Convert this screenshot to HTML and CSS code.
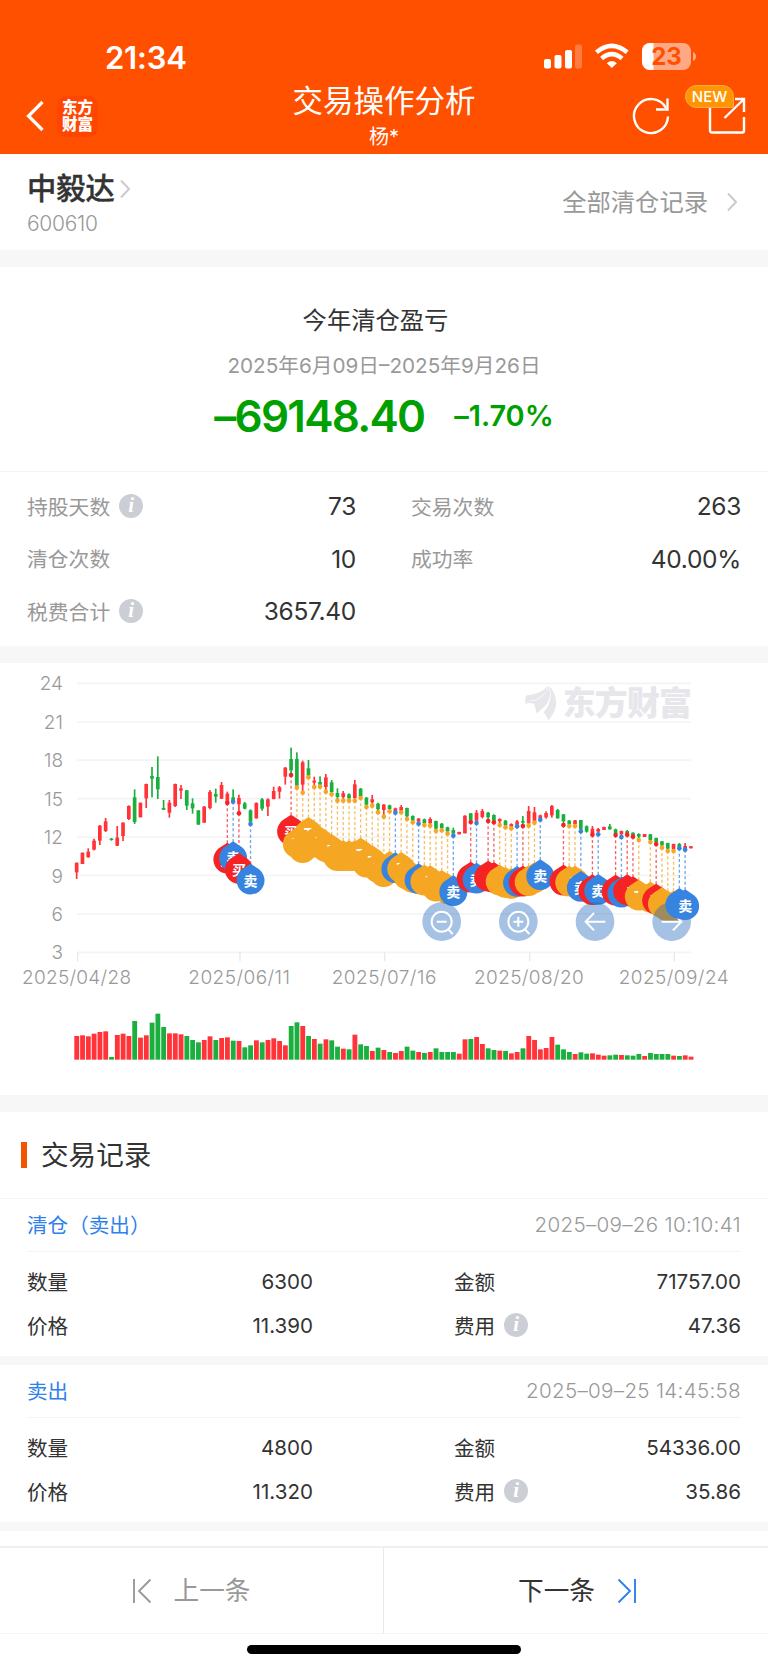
FILE: index.html
```html
<!DOCTYPE html>
<html lang="zh-CN">
<head>
    <meta charset="UTF-8">
    <meta name="viewport" content="width=device-width, initial-scale=1.0">
    <title>交易操作分析</title>
    <link rel="stylesheet" href="styles.css">
</head>
<body>
    <header class="header">
        <div class="status">
            <span class="time">21:34</span>
            <svg class="status-icons" width="154" height="28" viewBox="0 0 154 28">
                <g fill="#fff">
                    <rect x="0" y="16" width="7" height="9.500" rx="2"/>
                    <rect x="10.500" y="12" width="7" height="13.500" rx="2"/>
                    <rect x="21" y="7" width="7" height="18.500" rx="2"/>
                    <rect x="31" y="1.500" width="7" height="24" rx="2" opacity=".25"/>
                    <path d="M67.800 25 L62.800 20.200 Q67.800 16 72.800 20.200 Z"/>
                </g>
                <g fill="none" stroke="#fff" stroke-width="4.600">
                    <path d="M52.400 9.300 Q67.800 -3.500 83.200 9.300"/>
                    <path d="M57.600 15.500 Q67.800 6.700 78 15.500"/>
                </g>
                <rect x="98" y="0" width="49" height="27" rx="8" fill="#ffa883"/>
                <path d="M109.500 0H106a8 8 0 0 0-8 8v11a8 8 0 0 0 8 8h3.500Z" fill="#fff"/>
                <path d="M149 9q3 1.500 3 4.500t-3 4.500Z" fill="#ffa883"/>
                <text class="battery-text" x="122.500" y="21.700" text-anchor="middle">23</text>
            </svg>
        </div>
        <div class="nav">
            <div class="nav-left">
                <svg width="18" height="32" viewBox="0 0 18 32" fill="none" stroke="#fff" stroke-width="3.200"><path d="M16.500 2 L2.500 16 L16.500 30"/></svg>
                <div class="logo">东方<br>财富</div>
            </div>
            <div class="nav-title">
                <h1>交易操作分析</h1>
                <p>杨*</p>
            </div>
            <div class="nav-right">
                <svg width="38" height="38" viewBox="0 0 38 38" fill="none" stroke="#fff" stroke-width="2.400"><path d="M36 19.500 A17 17 0 1 1 34 11"/><path d="M35.500 1.500 V12.500 H24"/></svg>
                <div class="share">
                    <svg width="38" height="38" viewBox="0 0 38 38" fill="none" stroke="#fff" stroke-width="2.400"><path d="M36 20 V33.500 Q36 35.500 34 35.500 H4 Q2 35.500 2 33.500 V5"/><path d="M27 2 H36 V15 M36 2 L16.500 21"/></svg>
                    <span class="badge">NEW</span>
                </div>
            </div>
        </div>
    </header>

    <!-- Stock -->
    <section class="stock">
        <div>
            <h2>中毅达<svg width="10" height="20" viewBox="0 0 10 20" fill="none" stroke="#ccc" stroke-width="2"><path d="M1 1.500 L9 10 L1 18.500"/></svg></h2>
            <p>600610</p>
        </div>
        <div class="all-records"><span>全部清仓记录</span><svg width="10" height="20" viewBox="0 0 10 20" fill="none" stroke="#ccc" stroke-width="2"><path d="M1 1.500 L9 10 L1 18.500"/></svg></div>
    </section>

    <!-- Profit and loss -->
    <section class="profit">
        <h3>今年清仓盈亏</h3>
        <p class="period">2025年6月09日–2025年9月26日</p>
        <div class="amount"><span class="total">–69148.40</span><span class="rate">–1.70%</span></div>
    </section>
    <section class="stats">
        <div><span>持股天数<i class="info">i</i></span><b>73</b></div>
        <div><span>交易次数</span><b>263</b></div>
        <div><span>清仓次数</span><b>10</b></div>
        <div><span>成功率</span><b>40.00%</b></div>
        <div><span>税费合计<i class="info">i</i></span><b>3657.40</b></div>
    </section>

    <!-- K line chart, drawn at 3x -->
    <section class="chart">
        <svg id="chart" width="768" height="432" viewBox="0 9 2304 1296">
            <g id="grid"></g>
            <g fill="#e6e6eb">
                <g transform="translate(1500 0)">
                    <path d="M77 132 C74 120 76 108 82 105 C105 103 130 96 143 78 C140 100 118 117 96 121 C86 123 80 126 77 132Z"/>
                    <path d="M77 132 C78 122 88 124 100 122 C122 118 140 102 144 78 C143 106 127 126 101 131 C90 128 82 128 77 132Z"/>
                    <path d="M101 131 C127 126 143 106 144 78 C152 92 152 115 140 132 C130 145 115 155 109 161 C108 150 106 140 101 131Z"/>
                    <path d="M148 78 C165 95 170 120 168 135 C165 155 155 170 145 181 C140 170 135 162 131 157 C150 135 157 110 148 78Z"/>
                </g>
                <text class="watermark" x="1688" y="166" textLength="388">东方财富</text>
            </g>
            <g id="candles"></g>
            <g id="pins"></g>
            <g id="buttons">
                <g fill="rgba(30,100,187,.4)">
                    <circle cx="1325" cy="785" r="58"/>
                    <circle cx="1555" cy="785" r="58"/>
                    <circle cx="1785" cy="785" r="58"/>
                    <circle cx="2015" cy="785" r="58"/>
                </g>
                <g fill="none" stroke="#fff" stroke-width="6">
                    <circle cx="1325" cy="785" r="30"/>
                    <path d="M1310 785 h30 M1345 808 L1358 822"/>
                    <circle cx="1555" cy="785" r="30"/>
                    <path d="M1540 785 h30 M1555 770 v30 M1575 808 L1588 822"/>
                    <path d="M1816 785 H1757 M1782 759 L1757 785 L1782 811"/>
                    <path d="M1985 785 H2044 M2019 759 L2044 785 L2019 811"/>
                </g>
            </g>
            <g id="last-pins"></g>
        </svg>
    </section>

    <!-- Trade records -->
    <section class="records">
        <h2 class="records-title">交易记录</h2>
        <div class="record">
            <div class="record-head"><span>清仓（卖出）</span><time>2025–09–26 10:10:41</time></div>
            <div class="record-body">
                <div><span>数量</span><b>6300</b></div>
                <div><span>金额</span><b>71757.00</b></div>
                <div><span>价格</span><b>11.390</b></div>
                <div><span>费用<i class="info">i</i></span><b>47.36</b></div>
            </div>
        </div>
        <div class="record">
            <div class="record-head"><span>卖出</span><time>2025–09–25 14:45:58</time></div>
            <div class="record-body">
                <div><span>数量</span><b>4800</b></div>
                <div><span>金额</span><b>54336.00</b></div>
                <div><span>价格</span><b>11.320</b></div>
                <div><span>费用<i class="info">i</i></span><b>35.86</b></div>
            </div>
        </div>
    </section>

    <footer class="pager">
        <div class="prev">
            <svg width="20" height="26" viewBox="0 0 20 26" fill="none" stroke="#999" stroke-width="1.900"><path d="M2 1 V25 M18.500 1.500 L7 13 L18.500 24.500"/></svg>
            <span>上一条</span>
        </div>
        <div class="next">
            <span>下一条</span>
            <svg width="20" height="26" viewBox="0 0 20 26" fill="none" stroke="#2f80ed" stroke-width="1.900"><path d="M18 1 V25 M1.500 1.500 L13 13 L1.500 24.500"/></svg>
        </div>
    </footer>
    <div class="home-bar"></div>

    <script src="chart.js"></script>
</body>
</html>
```
FILE: styles.css
```css
* {
    box-sizing: border-box;
}
body {
    margin: 0;
    height: 1669px;
    background: #fff;
    color: #333;
    font-family: Inter, "Noto Sans CJK SC", sans-serif;
    display: flex;
    flex-direction: column;
    overflow: hidden;
}
h1, h2, h3, p {
    margin: 0;
    font-weight: 400;
}
b {
    font-weight: 400;
}
svg {
    display: block;
    flex: none;
}
.header {
    height: 154px;
    background: #ff5000;
    color: #fff;
    padding-top: 36px;
}
.status {
    height: 42px;
    padding: 0 70px 0 105px;
    display: flex;
    justify-content: space-between;
    align-items: center;
}
.time {
    font-size: 31px;
    font-weight: 600;
    letter-spacing: -0.2px;
}
.battery-text {
    font-size: 24px;
    font-weight: 700;
    fill: #ff5000;
}
.nav {
    height: 76px;
    padding: 0 22px 0 26px;
    display: flex;
    justify-content: space-between;
}
.nav-left, .nav-right {
    width: 210px;
    height: 76px;
    display: flex;
    align-items: center;
}
.nav-left {
    gap: 13px;
}
.logo {
    width: 41px;
    height: 41px;
    border-radius: 9px;
    background: #ff4600;
    font-size: 15.5px;
    font-weight: 900;
    line-height: 17px;
    text-align: center;
    padding-top: 3px;
}
.nav-title {
    padding-right: 4px;
    text-align: center;
}
.nav-title h1 {
    font-size: 30.5px;
    line-height: 45px;
}
.nav-title p {
    font-size: 20px;
    line-height: 28px;
}
.nav-right {
    justify-content: flex-end;
    gap: 38px;
}
.share {
    position: relative;
}
.badge {
    position: absolute;
    left: -23px;
    top: -12px;
    width: 49px;
    height: 23px;
    border: 1px solid #ffab4a;
    border-radius: 12px 12px 2px 12px;
    background: #ff9500;
    font-size: 15px;
    font-weight: 500;
    line-height: 21px;
    text-align: center;
}
.stock {
    height: 113px;
    padding: 14px 31px 0 27px;
    border-bottom: 17px solid #f7f7f7;
    display: flex;
    justify-content: space-between;
}
.stock h2 {
    display: flex;
    align-items: center;
    gap: 5px;
    font-size: 29.3px;
    font-weight: 500;
    line-height: 42px;
    -webkit-text-stroke: 0.4px #333;
}
.stock p {
    font-size: 21px;
    font-weight: 300;
    letter-spacing: -0.3px;
    line-height: 28px;
    color: #999;
}
.all-records {
    height: 68px;
    display: flex;
    align-items: center;
    gap: 19px;
    font-size: 24.3px;
    color: #999;
}
.all-records span {
    padding-bottom: 3px;
}
.profit {
    height: 205px;
    padding-top: 33px;
    border-bottom: 1px solid #f3f3f3;
    text-align: center;
}
.profit h3 {
    padding-right: 17px;
    font-size: 24.3px;
    line-height: 40px;
}
.period {
    margin-top: 11px;
    font-size: 20.7px;
    line-height: 30px;
    color: #999;
}
.amount {
    display: flex;
    justify-content: center;
    align-items: center;
    gap: 30px;
    margin-top: 10px;
    line-height: 50px;
    color: #00a000;
}
.total {
    font-size: 44px;
    font-weight: 600;
    letter-spacing: -1.75px;
}
.rate {
    font-size: 29px;
    font-weight: 600;
    letter-spacing: -0.1px;
}
.stats {
    height: 191px;
    padding: 8px 27px 0;
    border-bottom: 17px solid #f7f7f7;
    display: grid;
    grid-template-columns: 329px 330px;
    grid-auto-rows: 52.5px;
    column-gap: 55px;
}
.stats div, .record-body div {
    display: flex;
    justify-content: space-between;
    align-items: center;
}
.stats span {
    display: flex;
    align-items: center;
    padding-bottom: 1px;
    font-size: 20.8px;
    color: #999;
}
.stats b {
    font-size: 24.5px;
    letter-spacing: -0.3px;
}
.info {
    width: 24px;
    height: 24px;
    margin-left: 9px;
    border-radius: 50%;
    background: #cbced4;
    color: #fff;
    font-family: "Liberation Serif", serif;
    font-size: 21px;
    font-weight: 700;
    font-style: italic;
    line-height: 23px;
    text-align: center;
}
.chart {
    height: 449px;
    border-bottom: 17px solid #f7f7f7;
}
.axis {
    font-size: 57px;
    font-weight: 300;
    fill: #999;
}
.watermark {
    font-size: 99px;
    font-weight: 900;
}
.pin-text {
    font-size: 42px;
    font-weight: 700;
    fill: #fff;
    text-anchor: middle;
}
.records {
    flex: 1;
}
.records-title {
    height: 87px;
    padding-left: 21px;
    padding-bottom: 1px;
    border-bottom: 1px solid #f3f3f3;
    display: flex;
    align-items: center;
    gap: 14px;
    font-size: 27.6px;
    line-height: 40px;
}
.records-title::before {
    content: "";
    width: 6px;
    height: 26px;
    background: #f25500;
}
.record {
    height: 166px;
    padding: 0 27px;
    border-bottom: 9px solid #f7f7f7;
    font-size: 20.6px;
}
.record-head {
    height: 53px;
    border-bottom: 1px solid #f3f3f3;
    display: flex;
    justify-content: space-between;
    align-items: center;
    color: #2f80ed;
}
.record-head span {
    padding-bottom: 2px;
}
.record-head time {
    padding-bottom: 1px;
    font-weight: 300;
    letter-spacing: 0.3px;
    color: #999;
}
.record-body {
    padding-top: 8px;
    display: grid;
    grid-template-columns: 286px 287px;
    grid-auto-rows: 43.5px;
    column-gap: 141px;
}
.record-body span {
    display: flex;
    align-items: center;
    padding-bottom: 1px;
}
.pager {
    height: 88px;
    border-top: 2px solid #f0f0f0;
    border-bottom: 1px solid #f3f3f3;
    display: flex;
    font-size: 25.7px;
}
.pager div {
    width: 50%;
    display: flex;
    justify-content: center;
    align-items: center;
    gap: 21px;
}
.pager span {
    padding-bottom: 4px;
}
.prev {
    color: #999;
    border-right: 1px solid #e8e8e8;
}
.pager .next {
    gap: 22px;
    padding-left: 3px;
}
.home-bar {
    width: 274px;
    height: 9px;
    margin: 11px auto 15px;
    border-radius: 5px;
    background: #000;
}
```
FILE: chart.js
```js
// high, low, body top, body bottom, volume, up (1) / down (0)
const candles = [
    [608,657,608,637,71,1],[578,612,578,612,73,1],[565,593,575,592,70,1],[536,571,542,569,78,1],
    [495,555,497,542,83,1],[474,516,484,513,85,1],[534,542,536,540,8,0],[498,558,533,557,74,1],
    [487,543,488,528,78,1],[436,480,438,477,71,1],[388,492,412,486,116,0],[428,472,428,472,66,1],
    [371,444,372,415,73,1],[321,412,348,356,111,0],[289,417,351,388,138,0],[420,450,444,449,98,0],
    [420,473,428,458,79,1],[371,441,372,438,79,1],[375,417,385,392,76,1],[390,450,391,437,71,0],
    [415,461,430,445,59,0],[451,494,451,494,52,0],[438,488,440,488,59,1],[390,448,396,444,70,1],
    [386,428,402,410,59,0],[366,417,375,416,65,1],[395,435,401,429,67,1],[388,430,412,425,57,0],
    [404,462,414,433,56,1],[426,448,430,446,37,0],[448,490,451,485,43,0],[427,476,429,475,58,1],
    [414,452,418,446,52,0],[415,468,418,440,59,1],[380,418,393,417,64,1],[378,416,382,395,56,1],
    [321,374,323,350,43,1],[263,345,297,331,101,0],[277,380,297,377,112,0],[302,397,307,374,101,1],
    [300,352,325,347,71,0],[350,380,362,368,62,1],[349,378,366,374,48,0],[342,393,352,381,61,1],
    [360,400,367,396,58,0],[385,418,399,411,39,0],[393,420,400,411,33,1],[400,420,403,415,31,0],
    [360,418,373,414,75,1],[384,413,386,410,46,0],[411,439,413,434,41,0],[405,434,418,427,26,1],
    [428,455,431,448,36,0],[432,468,434,450,29,1],[434,452,436,447,23,0],[443,457,445,453,20,1],
    [435,455,441,452,26,1],[443,475,444,469,39,0],[466,486,468,482,27,0],[474,490,476,484,23,1],
    [476,493,478,489,20,0],[472,495,477,490,23,1],[482,512,483,506,34,0],[489,508,491,504,23,0],
    [500,518,502,514,23,0],[503,525,510,520,23,0],[515,523,516,523,18,1],[466,520,467,520,61,1],
    [459,485,460,480,62,0],[450,488,458,482,68,1],[447,475,453,471,47,1],[456,482,458,472,34,0],
    [463,485,465,482,29,0],[475,492,477,484,27,1],[480,500,482,496,26,0],[490,505,492,500,19,1],
    [480,499,484,494,23,1],[468,497,483,488,34,0],[438,496,453,490,71,1],[441,488,457,486,59,1],
    [464,480,466,474,31,1],[454,476,459,472,35,1],[435,473,438,466,68,1],[447,476,450,475,45,0],
    [462,490,463,484,31,0],[480,496,482,492,23,0],[480,496,481,493,17,1],[480,512,480,508,22,0],
    [496,518,499,515,18,0],[498,522,506,519,19,1],[504,518,507,515,15,1],[500,510,501,510,12,1],
    [492,509,499,508,13,0],[506,524,508,520,15,0],[512,530,513,523,14,1],[510,524,513,520,13,0],
    [517,530,518,528,12,0],[520,540,522,530,17,0],[522,531,522,531,11,1],[522,546,523,540,20,0],
    [533,552,534,546,17,0],[543,562,544,556,17,0],[548,572,549,566,17,0],[551,572,552,567,12,1],
    [549,563,552,562,11,0],[549,568,558,565,13,1],[558,565,559,565,9,1]
];

// day index, price dot, kind of trade
const trades = [
    [26,429,"b"],[27,425,"s"],[28,460,"b"],[30,492,"s"],[37,345,"b"],[38,383,"t"],[39,398,"t"],
    [40,352,"t"],[41,381,"t"],[42,380,"t"],[43,395,"t"],[44,403,"t"],[45,422,"t"],[46,422,"t"],
    [47,422,"t"],[48,422,"t"],[49,414,"t"],[50,441,"t"],[51,437,"t"],[52,457,"t"],[53,470,"t"],
    [54,454,"t"],[55,458,"s"],[56,457,"t"],[57,477,"t"],[58,487,"t"],[59,491,"s"],[60,495,"t"],
    [61,497,"t"],[62,513,"t"],[63,511,"t"],[64,521,"t"],[65,527,"s"],[68,486,"b"],[69,489,"s"],
    [71,483,"b"],[72,487,"b"],[73,495,"t"],[74,502,"t"],[75,505,"t"],[76,499,"s"],[77,498,"b"],
    [78,497,"t"],[79,488,"t"],[80,479,"s"],[84,495,"b"],[85,498,"t"],[86,498,"t"],[87,514,"s"],
    [89,524,"b"],[90,523,"s"],[93,525,"b"],[94,531,"s"],[95,524,"b"],[96,530,"b"],[97,540,"t"],
    [99,546,"t"],[100,552,"b"],[101,563,"t"],[102,573,"t"],[103,573,"t"],[104,565,"s"],[105,569,"s"]
];

const kinds = {
    b: { color: "#f52323", label: "买" },
    s: { color: "#3783e0", label: "卖" },
    t: { color: "#f5a623", label: "T" }
};
// label, tick x, label start, label width
const dates = [
    ["2025/04/28", 233, 66, 327],
    ["2025/06/11", 720, 565, 305],
    ["2025/07/16", 1154, 995, 314],
    ["2025/08/20", 1589, 1422, 329],
    ["2025/09/24", 2023, 1856, 330]
];
const xOf = i => 230 + 17.385 * i;

// Grid and axis labels
let grid = "";
for (let n = 0; n < 8; n++) {
    const y = 70 + n * 115.3;
    grid += `<path d="M231 ${y}H2073" stroke="#f4f4f4" stroke-width="5"/>`;
    grid += `<text class="axis" x="189" y="${y + 21}" text-anchor="end">${24 - n * 3}</text>`;
}
dates.forEach(([text, x, start, width]) => {
    grid += `<path d="M${x} 877V904" stroke="#e8e8e8" stroke-width="4"/>`;
    grid += `<text class="axis" x="${start}" y="971" textLength="${width}">${text}</text>`;
});
document.getElementById("grid").innerHTML = grid;

// Candles with the volume bars below
let bars = "";
candles.forEach(([high, low, top, bottom, volume, up], i) => {
    const x = xOf(i);
    const color = up ? "#ff3338" : "#1aaf3e";
    bars += `<g fill="${color}"><rect x="${x - 2.5}" y="${high}" width="5" height="${low - high}"/>`;
    bars += `<rect x="${x - 5.5}" y="${top}" width="11" height="${bottom - top}"/>`;
    bars += `<rect x="${x - 7}" y="${1199 - volume}" width="14.500" height="${volume}"/></g>`;
});
document.getElementById("candles").innerHTML = bars;

function drawPin([day, y, kind], i) {
    const x = xOf(day);
    const cy = y + 169;
    const { color, label } = kinds[kind];
    const next = trades[i + 1];
    const hidden = next && next[0] === day + 1 && (kind === "t" || day > 69) && next[1] < y + 9;
    return `<path d="M${x} ${cy - 50} L${x + 21} ${cy - 36} A42 42 0 1 1 ${x - 21} ${cy - 36}Z" fill="${color}"/>` +
        (hidden ? "" : `<text class="pin-text" x="${x}" y="${cy + 16}">${label}</text>`);
}
let lines = "";
trades.forEach(([day, y, kind]) => {
    const x = xOf(day);
    const color = kinds[kind].color;
    lines += `<path d="M${x} ${y}V${y + 120}" stroke="${color}" stroke-width="4" stroke-dasharray="9 7" opacity=".7"/>`;
    lines += `<circle cx="${x}" cy="${y}" r="7" fill="${color}"/>`;
});
const pins = trades.map(drawPin);
document.getElementById("pins").innerHTML = lines + pins.slice(0, -2).join("");
document.getElementById("last-pins").innerHTML = pins.slice(-2).join("");
```
